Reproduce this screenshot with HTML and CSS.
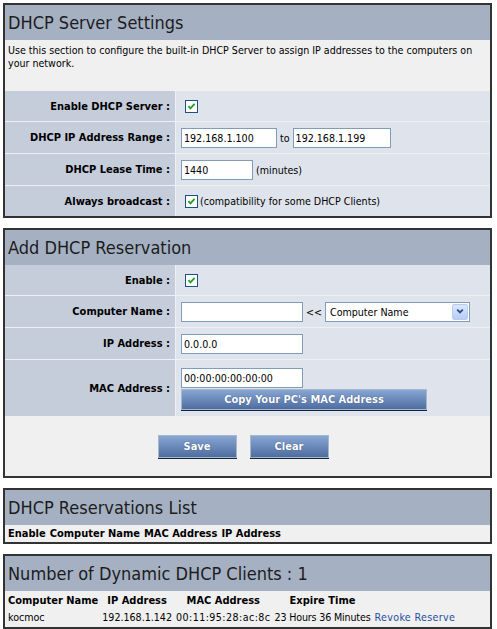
FILE: index.html
```html
<!DOCTYPE html>
<html>
<head>
<meta charset="utf-8">
<title>DHCP</title>
<link rel="stylesheet" href="styles.css">
</head>
<body>
<div class="page">
  <section class="box">
    <h2 class="box-title">DHCP Server Settings</h2>
    <div class="desc">Use this section to configure the built-in DHCP Server to assign IP addresses to the computers on your network.</div>
    <table class="form">
      <tr class="first">
        <th>Enable DHCP Server :</th>
        <td><span class="cb"><svg viewBox="0 0 11 11" width="11" height="11"><path d="M2.5 5.2 L4.4 7.3 L8.6 2.8" fill="none" stroke="#21a121" stroke-width="1.8"/></svg></span></td>
      </tr>
      <tr>
        <th>DHCP IP Address Range :</th>
        <td><span class="inp w95">192.168.1.100</span><span class="sep">to</span><span class="inp w98">192.168.1.199</span></td>
      </tr>
      <tr>
        <th>DHCP Lease Time :</th>
        <td><span class="inp w72">1440</span><span class="sep">(minutes)</span></td>
      </tr>
      <tr class="last">
        <th>Always broadcast :</th>
        <td><span class="cb"><svg viewBox="0 0 11 11" width="11" height="11"><path d="M2.5 5.2 L4.4 7.3 L8.6 2.8" fill="none" stroke="#21a121" stroke-width="1.8"/></svg></span><span class="note">(compatibility for some DHCP Clients)</span></td>
      </tr>
    </table>
  </section>

  <section class="box">
    <h2 class="box-title">Add DHCP Reservation</h2>
    <table class="form">
      <tr class="first">
        <th>Enable :</th>
        <td><span class="cb"><svg viewBox="0 0 11 11" width="11" height="11"><path d="M2.5 5.2 L4.4 7.3 L8.6 2.8" fill="none" stroke="#21a121" stroke-width="1.8"/></svg></span></td>
      </tr>
      <tr>
        <th>Computer Name :</th>
        <td><span class="inp w122"></span><span class="sep">&lt;&lt;</span><span class="select"><span class="select-text">Computer Name</span><span class="select-btn"><svg viewBox="0 0 15 15" width="15" height="15"><path d="M4.5 5.5 L7.5 8.5 L10.5 5.5" fill="none" stroke="#2d4f8a" stroke-width="2"/></svg></span></span></td>
      </tr>
      <tr>
        <th>IP Address :</th>
        <td><span class="inp w122">0.0.0.0</span></td>
      </tr>
      <tr class="mac">
        <th>MAC Address :</th>
        <td>
          <div class="mac-cell">
            <span class="inp w122">00:00:00:00:00:00</span>
            <span class="btn btn-copy">Copy Your PC's MAC Address</span>
          </div>
        </td>
      </tr>
    </table>
    <div class="actions">
      <span class="btn btn-act">Save</span>
      <span class="btn btn-act">Clear</span>
    </div>
  </section>

  <section class="box">
    <h2 class="box-title">DHCP Reservations List</h2>
    <table class="list list-tight">
      <tr><th>Enable</th><th>Computer Name</th><th>MAC Address</th><th>IP Address</th></tr>
    </table>
  </section>

  <section class="box">
    <h2 class="box-title">Number of Dynamic DHCP Clients : 1</h2>
    <table class="list">
      <tr><th>Computer Name</th><th>IP Address</th><th>MAC Address</th><th>Expire Time</th></tr>
      <tr><td>kocmoc</td><td>192.168.1.142</td><td class="num">00:11:95:28:ac:8c</td><td class="tight">23 Hours 36 Minutes</td><td class="wide"><a class="lnk">Revoke</a> <a class="lnk">Reserve</a></td></tr>
    </table>
  </section>
</div>
</body>
</html>
```

FILE: styles.css
```css
* { box-sizing: border-box; }
html, body { margin: 0; padding: 0; background: #ffffff; }
body {
  font-family: "DejaVu Sans Condensed", "DejaVu Sans", sans-serif;
  font-stretch: condensed;
  font-size: 10.6px;
  color: #000;
}
.page {
  padding: 3px 0 0 3px;
  width: 492px;
  display: flex;
  flex-direction: column;
  gap: 10px;
}
.box {
  border: 2px solid #333;
  background: #f0f0f0;
}
.box-title {
  margin: 0;
  height: 35px;
  padding: 0 0 0 3px;
  background: #a5b1c3;
  font-weight: normal;
  font-size: 18px;
  line-height: 36px;
  color: #1c1c1c;
}
.desc {
  height: 51px;
  padding: 4px 3px;
  line-height: 13px;
}
.form {
  border-collapse: separate;
  border-spacing: 0;
  width: 100%;
}
.form th, .form td {
  height: 32px;
  border-bottom: 1px solid #eef0f3;
  padding: 0;
}
.form tr.first th, .form tr.first td { height: 31px; }
.form tr.last th, .form tr.last td { border-bottom: 0; height: 30px; }
.form tr.mac th, .form tr.mac td { border-bottom: 0; height: 56px; }
.form th {
  width: 171px;
  background: #c5cdda;
  text-align: right;
  padding-right: 5px;
  border-right: 1px solid #eef0f3;
  font-weight: bold;
  font-size: 11px;
}
.form td {
  background: #dfe4ec;
  padding-left: 5px;
  white-space: nowrap;
}
.form td > * { vertical-align: middle; }
.inp {
  display: inline-block;
  height: 20px;
  line-height: 18px;
  border: 1px solid #7f9db9;
  background: #fff;
  padding: 0 2px;
}
.w95 { width: 96px; }
.w98 { width: 98px; }
.w72 { width: 72px; }
.w122 { width: 122px; }
.sep { margin: 0 3px; }
.note { margin-left: 2px; }
.cb {
  display: inline-block;
  width: 13px;
  height: 13px;
  margin-left: 4px;
  border: 1px solid #1c5180;
  background: #fff;
}
.cb svg { display: block; }
.select {
  display: inline-flex;
  width: 145px;
  height: 20px;
  border: 1px solid #7f9db9;
  background: #fff;
  padding: 1px;
}
.select-text { flex: 1; line-height: 16px; padding-left: 3px; }
.select-btn {
  width: 16px;
  height: 16px;
  border: 1px solid #b9cbef;
  border-radius: 2px;
  background: linear-gradient(#dbe6fc, #b7cdf6);
  display: flex;
  align-items: center;
  justify-content: center;
}
.mac-cell {
  display: flex;
  flex-direction: column;
  gap: 1px;
  align-items: flex-start;
  padding-top: 2px;
}
.btn {
  display: inline-flex;
  align-items: center;
  justify-content: center;
  color: #fff;
  font-weight: bold;
  font-size: 11px;
  border: 1px solid #a8b8cc;
  background: linear-gradient(#88a6d4, #4e6c9e);
  box-shadow: 0 1px 0 #13233d;
  text-shadow: 0 0 1px #2a4070;
}
.btn-copy { width: 246px; height: 21px; }
.actions {
  height: 60px;
  display: flex;
  justify-content: center;
  align-items: center;
  gap: 13px;
  padding-right: 9px;
}
.btn-act { width: 79px; height: 23px; }
.list {
  border-spacing: 2px;
}
.list th, .list td {
  padding: 1px;
  line-height: 13px;
  white-space: nowrap;
}
.list-tight th, .list-tight td { padding: 0 1px; }
.list th { font-weight: bold; font-size: 11px; }
.list td { text-align: left; }
.list td.num { letter-spacing: 0.45px; }
.list td.tight { letter-spacing: -0.15px; }
.list td.wide { letter-spacing: 0.35px; }
.lnk { color: #1f4f9f; text-decoration: none; }
```
